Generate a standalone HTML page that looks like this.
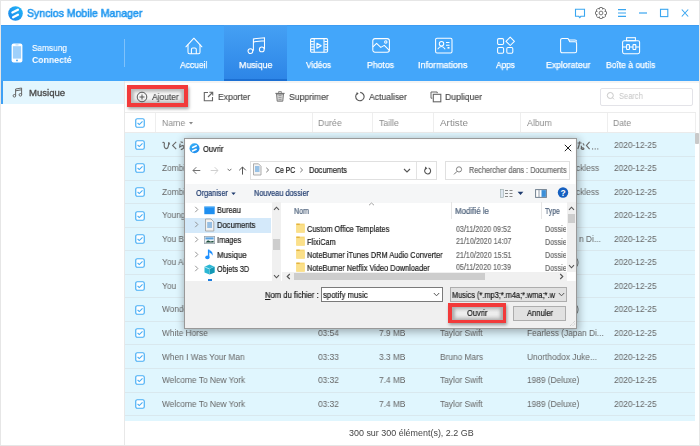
<!DOCTYPE html><html><head><meta charset="utf-8"><style>
*{margin:0;padding:0;box-sizing:border-box}
html,body{width:700px;height:446px;overflow:hidden;background:#fff;font-family:"Liberation Sans",sans-serif}
.a{position:absolute}
.dlg .t{-webkit-text-stroke:0.2px currentColor}
.t{position:absolute;line-height:1;white-space:nowrap;transform-origin:0 0;will-change:transform}
</style></head><body>
<div class="a" style="left:0px;top:0px;width:700px;height:446px;border:1px solid #e6e6e6"></div>
<svg class="a" style="left:7.5px;top:5.8px;" width="15" height="15" viewBox="0 0 15 15"><defs><linearGradient id="lg" x1="1" y1="0" x2="0" y2="1"><stop offset="0" stop-color="#20b8f8"/><stop offset="1" stop-color="#1e84ea"/></linearGradient></defs><circle cx="7.5" cy="7.5" r="7.3" fill="url(#lg)"/><path d="M4.4 6.5 L9.9 3.8 M5.1 11.3 L9.9 8.7" stroke="#fff" stroke-width="2.3" stroke-linecap="round"/></svg>
<div class="t" style="left:27.13px;top:7.80px;font-size:11.4px;color:#2399f0;font-weight:normal;transform:scaleX(0.9247);-webkit-text-stroke:0.6px #2399f0">Syncios Mobile Manager</div>
<svg class="a" style="left:574px;top:8px;" width="12" height="11" viewBox="0 0 12 11"><path d="M1.5 1.2 H10.5 V8.3 H6.8 L5.8 9.6 L4.8 8.3 H1.5 Z" fill="none" stroke="#3aa6f0" stroke-width="1.1"/></svg>
<svg class="a" style="left:595px;top:7px;" width="12" height="12" viewBox="0 0 12 12"><path d="M11.47 4.78 L11.47 7.22 L9.83 7.71 L9.92 7.50 L10.73 9.00 L9.00 10.73 L7.50 9.92 L7.71 9.83 L7.22 11.47 L4.78 11.47 L4.29 9.83 L4.50 9.92 L3.00 10.73 L1.27 9.00 L2.08 7.50 L2.17 7.71 L0.53 7.22 L0.53 4.78 L2.17 4.29 L2.08 4.50 L1.27 3.00 L3.00 1.27 L4.50 2.08 L4.29 2.17 L4.78 0.53 L7.22 0.53 L7.71 2.17 L7.50 2.08 L9.00 1.27 L10.73 3.00 L9.92 4.50 L9.83 4.29 Z" fill="none" stroke="#777" stroke-width="1"/><circle cx="6" cy="6" r="1.9" fill="none" stroke="#777" stroke-width="1"/></svg>
<svg class="a" style="left:617px;top:8px;" width="10" height="10" viewBox="0 0 10 10"><path d="M1 1.6 H9 M1 5 H9 M1 8.4 H9" stroke="#3aa6f0" stroke-width="1.1"/></svg>
<svg class="a" style="left:638px;top:8px;" width="10" height="10" viewBox="0 0 10 10"><path d="M1 5 H9" stroke="#3aa6f0" stroke-width="1.2"/></svg>
<svg class="a" style="left:659px;top:8px;" width="10" height="10" viewBox="0 0 10 10"><rect x="1.5" y="1.3" width="7.3" height="7.3" fill="none" stroke="#3aa6f0" stroke-width="1.1"/></svg>
<svg class="a" style="left:680px;top:8px;" width="10" height="10" viewBox="0 0 10 10"><path d="M1.8 1.5 L8.2 8.5 M8.2 1.5 L1.8 8.5" stroke="#3aa6f0" stroke-width="1.1"/></svg>
<div class="a" style="left:1px;top:25px;width:698px;height:56px;background:#43a6fa"></div>
<div class="a" style="left:1px;top:25px;width:698px;height:1px;background:#3d9cf2"></div>
<svg class="a" style="left:11px;top:43px;" width="12" height="20" viewBox="0 0 12 20"><rect x="0.6" y="0.6" width="10.8" height="18.8" rx="2" fill="#fff"/><rect x="1.9" y="3.2" width="8.2" height="12.4" fill="#9fd0fb"/><circle cx="6" cy="17.4" r="0.9" fill="#45a4f7"/><rect x="4.5" y="1.5" width="3" height="0.8" fill="#9fd0fb"/></svg>
<div class="t" style="left:31.63px;top:44.10px;font-size:8.8px;color:#fff;font-weight:normal;transform:scaleX(0.9389);-webkit-text-stroke:0.15px #fff">Samsung</div>
<div class="t" style="left:31.65px;top:55.30px;font-size:9.4px;color:#fff;font-weight:bold;transform:scaleX(0.9256);">Connecté</div>
<div class="a" style="left:124px;top:39px;width:1px;height:28px;background:rgba(255,255,255,.32)"></div>
<div class="a" style="left:224px;top:25px;width:63px;height:56px;background:linear-gradient(#45a0f4,#2c84e6)"></div>
<div class="a" style="left:224px;top:79px;width:63px;height:2px;background:#1c6fd2"></div>
<div class="t" style="left:179.58px;top:60.90px;font-size:9.2px;color:#fff;font-weight:normal;transform:scaleX(0.9233);-webkit-text-stroke:0.25px #fff">Accueil</div>
<svg class="a" style="left:184.5px;top:36.5px;" width="20" height="20" viewBox="0 0 20 20"><path d="M0.9 9.8 L8.9 1.2 L16.9 9.8" stroke="#fff" stroke-width="1.05" fill="none" stroke-linejoin="round" stroke-linecap="round"/><path d="M3 7.6 V15.3 Q3 16.8 4.5 16.8 H13.5 Q15 16.8 15 15.3 V7.6" stroke="#fff" stroke-width="1.05" fill="none"/><path d="M6.4 16.8 V12.4 Q6.4 11 7.8 11 H9.9 Q11.3 11 11.3 12.4 V16.8" stroke="#fff" stroke-width="1.05" fill="none"/></svg>
<div class="t" style="left:238.87px;top:60.90px;font-size:9.2px;color:#fff;font-weight:normal;transform:scaleX(0.9642);-webkit-text-stroke:0.25px #fff">Musique</div>
<svg class="a" style="left:246.5px;top:36.5px;" width="20" height="20" viewBox="0 0 20 20"><path d="M6.4 13.8 V1.9 L17.5 0.8 V12.2 M6.4 4.9 L17.5 3.8" stroke="#fff" stroke-width="1.05" fill="none"/><circle cx="3.4" cy="14.1" r="2.4" stroke="#fff" stroke-width="1.05" fill="none"/><circle cx="14.8" cy="12.4" r="2.4" stroke="#fff" stroke-width="1.05" fill="none"/></svg>
<div class="t" style="left:305.56px;top:60.90px;font-size:9.2px;color:#fff;font-weight:normal;transform:scaleX(0.8986);-webkit-text-stroke:0.25px #fff">Vidéos</div>
<svg class="a" style="left:309.5px;top:37px;" width="20" height="20" viewBox="0 0 20 20"><rect x="0.6" y="1.6" width="17" height="13.6" rx="1.2" stroke="#fff" stroke-width="1.05" fill="none"/><path d="M4.2 1.6 V15.2 M14 1.6 V15.2" stroke="#fff" stroke-width="1.05" fill="none"/><path d="M1 4.5 H3.8 M1 7.3 H3.8 M1 10 H3.8 M1 12.7 H3.8 M14.4 4.5 H17.2 M14.4 7.3 H17.2 M14.4 10 H17.2 M14.4 12.7 H17.2" stroke="#fff" stroke-width="1.05"/><path d="M6.9 6.3 V11.2 L11.2 8.75 Z" stroke="#fff" stroke-width="1.05" fill="none" stroke-linejoin="round"/></svg>
<div class="t" style="left:366.88px;top:60.90px;font-size:9.2px;color:#fff;font-weight:normal;transform:scaleX(0.9436);-webkit-text-stroke:0.25px #fff">Photos</div>
<svg class="a" style="left:372px;top:37px;" width="20" height="20" viewBox="0 0 20 20"><rect x="0.8" y="1.6" width="16.6" height="13.6" rx="2.2" stroke="#fff" stroke-width="1.05" fill="none"/><path d="M0.9 9.8 L4.6 6.3 L8.8 10.4 L12.3 8.4 L17.3 13.3" stroke="#fff" stroke-width="1.05" fill="none" stroke-linejoin="round"/><circle cx="13.8" cy="5" r="1.2" stroke="#fff" stroke-width="1.05" fill="none"/></svg>
<div class="t" style="left:418.17px;top:60.90px;font-size:9.2px;color:#fff;font-weight:normal;transform:scaleX(0.9788);-webkit-text-stroke:0.25px #fff">Informations</div>
<svg class="a" style="left:435px;top:37px;" width="20" height="20" viewBox="0 0 20 20"><rect x="0.6" y="1.3" width="16.4" height="14.6" rx="1.4" stroke="#fff" stroke-width="1.05" fill="none"/><circle cx="6.5" cy="6.7" r="2.2" stroke="#fff" stroke-width="1.05" fill="none"/><path d="M2.6 12.2 Q6.4 6.8 10.2 12.2" stroke="#fff" stroke-width="1.05" fill="none"/><path d="M11 5.5 H14.5 M11 8.3 H14.5" stroke="#fff" stroke-width="1.05"/><path d="M12.5 10.8 H14.5" stroke="#fff" stroke-width="1.6"/></svg>
<div class="t" style="left:496.38px;top:60.90px;font-size:9.2px;color:#fff;font-weight:normal;transform:scaleX(0.9016);-webkit-text-stroke:0.25px #fff">Apps</div>
<svg class="a" style="left:497px;top:36px;" width="20" height="20" viewBox="0 0 20 20"><rect x="0.6" y="2.6" width="6" height="5.8" rx="1.2" stroke="#fff" stroke-width="1.05" fill="none"/><path d="M13.2 1.1 L17.4 5.3 L13.2 9.5 L9 5.3 Z" stroke="#fff" stroke-width="1.05" fill="none" stroke-linejoin="round"/><rect x="0.6" y="11.5" width="6" height="5.8" rx="1.2" stroke="#fff" stroke-width="1.05" fill="none"/><rect x="9.8" y="11.5" width="6" height="5.8" rx="1.2" stroke="#fff" stroke-width="1.05" fill="none"/></svg>
<div class="t" style="left:545.68px;top:60.90px;font-size:9.2px;color:#fff;font-weight:normal;transform:scaleX(0.9450);-webkit-text-stroke:0.25px #fff">Explorateur</div>
<svg class="a" style="left:560px;top:37px;" width="20" height="20" viewBox="0 0 20 20"><path d="M0.6 3.2 Q0.6 1.5 2.3 1.5 H8 L9.8 4.8 H15 Q16.6 4.8 16.6 6.4 V14 Q16.6 15.7 14.9 15.7 H2.3 Q0.6 15.7 0.6 14 Z" stroke="#fff" stroke-width="1.05" fill="none" stroke-linejoin="round"/><path d="M8.8 2.9 H15 Q16.6 2.9 16.6 4.6" stroke="#fff" stroke-width="1.05" fill="none"/></svg>
<div class="t" style="left:605.90px;top:60.90px;font-size:9.2px;color:#fff;font-weight:normal;transform:scaleX(0.9287);-webkit-text-stroke:0.25px #fff">Boîte à outils</div>
<svg class="a" style="left:622px;top:37px;" width="20" height="20" viewBox="0 0 20 20"><rect x="4.6" y="0.7" width="8.8" height="3" stroke="#fff" stroke-width="1.05" fill="none"/><rect x="0.6" y="3.7" width="17" height="13" rx="1.6" stroke="#fff" stroke-width="1.05" fill="none"/><path d="M0.8 10 H4.6 M7.4 10 H11 M13.8 10 H17.4" stroke="#fff" stroke-width="1.05"/><rect x="4.6" y="7.6" width="2.8" height="4.8" rx=".5" stroke="#fff" stroke-width="1.05" fill="none"/><rect x="11" y="7.6" width="2.8" height="4.8" rx=".5" stroke="#fff" stroke-width="1.05" fill="none"/></svg>
<div class="a" style="left:124px;top:81px;width:1px;height:364px;background:#e8e8e8"></div>
<div class="a" style="left:1px;top:81px;width:123px;height:23px;background:#e3f6fe"></div>
<div class="a" style="left:1px;top:81px;width:2px;height:23px;background:#3ea0f5"></div>
<svg class="a" style="left:12px;top:87px;" width="11" height="11" viewBox="0 0 11 11"><path d="M3.6 8.6 V2 L9.6 1 V7.6 M3.6 3.8 L9.6 2.8" fill="none" stroke="#666" stroke-width="1"/><circle cx="2.4" cy="8.8" r="1.3" fill="none" stroke="#666" stroke-width="1"/><circle cx="8.4" cy="7.8" r="1.3" fill="none" stroke="#666" stroke-width="1"/></svg>
<div class="t" style="left:29.21px;top:88.90px;font-size:9.2px;color:#4a4a4a;font-weight:normal;transform:scaleX(1.0416);-webkit-text-stroke:0.3px #4a4a4a">Musique</div>
<div class="a" style="left:125px;top:81px;width:574px;height:2px;background:#f4f4f4"></div>
<div class="a" style="left:127px;top:85px;width:61px;height:22px;background:#f23a3a;box-shadow:1px 2px 3px rgba(0,0,0,.35)"></div>
<div class="a" style="left:131px;top:89px;width:53px;height:14px;background:linear-gradient(#b9b9b9,#f4f4f4 35%,#f4f4f4 65%,#c8c8c8);box-shadow:inset 3px 0 3px #bbb,inset -3px 0 3px #bbb"></div>
<svg class="a" style="left:136px;top:91px;" width="12" height="12" viewBox="0 0 12 12"><circle cx="6" cy="6" r="4.8" fill="none" stroke="#555" stroke-width="1"/><path d="M6 3.5 V8.5 M3.5 6 H8.5" stroke="#555" stroke-width="1"/></svg>
<div class="t" style="left:151.58px;top:92.30px;font-size:9.4px;color:#474747;font-weight:normal;transform:scaleX(0.9051);-webkit-text-stroke:0.15px #474747">Ajouter</div>
<svg class="a" style="left:203px;top:91px;" width="11" height="11" viewBox="0 0 11 11"><path d="M5 1.5 H1.3 V9.7 H9.5 V6" fill="none" stroke="#666" stroke-width="1.1"/><path d="M5 6 L9.5 1.5 M6.4 1.3 H9.7 V4.6" fill="none" stroke="#666" stroke-width="1.1"/></svg>
<div class="t" style="left:217.69px;top:92.30px;font-size:9.4px;color:#474747;font-weight:normal;transform:scaleX(0.9129);-webkit-text-stroke:0.15px #474747">Exporter</div>
<svg class="a" style="left:275px;top:91px;" width="10" height="11" viewBox="0 0 10 11"><path d="M3.6 1.8 V0.7 H6.4 V1.8" fill="none" stroke="#707070" stroke-width=".9"/><path d="M0.4 2.4 H9.6" stroke="#707070" stroke-width="1.1"/><path d="M1.5 3 L2.2 10.2 H7.8 L8.5 3 Z" fill="#d4d4d4" stroke="#707070" stroke-width=".9"/><path d="M3.5 4.6 H6.5 M3.5 6.6 H6.5 M3.5 8.6 H6.5" stroke="#8a8a8a" stroke-width=".8"/></svg>
<div class="t" style="left:289.21px;top:92.30px;font-size:9.4px;color:#474747;font-weight:normal;transform:scaleX(0.9207);-webkit-text-stroke:0.15px #474747">Supprimer</div>
<svg class="a" style="left:354px;top:91px;" width="11" height="11" viewBox="0 0 11 11"><path d="M3.4 2.2 A4.2 4.2 0 1 0 6.2 1.4" fill="none" stroke="#555" stroke-width="1.1"/><path d="M2.6 0.9 L4.6 2.4 L2.9 3.9" fill="#555"/></svg>
<div class="t" style="left:368.58px;top:92.30px;font-size:9.4px;color:#474747;font-weight:normal;transform:scaleX(0.9197);-webkit-text-stroke:0.15px #474747">Actualiser</div>
<svg class="a" style="left:430px;top:91px;" width="12" height="12" viewBox="0 0 12 12"><path d="M7.2 2.2 V1 H1 V7.2 H2.3" fill="none" stroke="#666" stroke-width="1"/><rect x="3.3" y="3.3" width="7.5" height="7.5" fill="none" stroke="#666" stroke-width="1.1"/></svg>
<div class="t" style="left:445.28px;top:92.30px;font-size:9.4px;color:#474747;font-weight:normal;transform:scaleX(0.9258);-webkit-text-stroke:0.15px #474747">Dupliquer</div>
<div class="a" style="left:600px;top:87.5px;width:93px;height:18px;border:1px solid #e3e3e8;border-radius:2px;background:#fff"></div>
<svg class="a" style="left:606px;top:91px;" width="9" height="10" viewBox="0 0 9 10"><circle cx="4.3" cy="4.5" r="3" fill="none" stroke="#c8c8c8" stroke-width="1"/><path d="M6.5 6.8 L8 8.3" stroke="#c8c8c8" stroke-width="1"/></svg>
<div class="t" style="left:619.16px;top:92.35px;font-size:8.3px;color:#c4c4c4;font-weight:normal;transform:scaleX(0.9056);">Search</div>
<div class="a" style="left:125px;top:112px;width:571px;height:1px;background:#ececec"></div>
<div class="a" style="left:125px;top:132px;width:571px;height:1px;background:#ebebeb"></div>
<div class="a" style="left:155px;top:113px;width:1px;height:19px;background:#eeeeee"></div>
<div class="a" style="left:312px;top:113px;width:1px;height:19px;background:#eeeeee"></div>
<div class="a" style="left:372px;top:113px;width:1px;height:19px;background:#eeeeee"></div>
<div class="a" style="left:433px;top:113px;width:1px;height:19px;background:#eeeeee"></div>
<div class="a" style="left:520px;top:113px;width:1px;height:19px;background:#eeeeee"></div>
<div class="a" style="left:607px;top:113px;width:1px;height:19px;background:#eeeeee"></div>
<div class="a" style="left:695px;top:113px;width:1px;height:19px;background:#eeeeee"></div>
<svg class="a" style="left:135px;top:117.5px;" width="10" height="10" viewBox="0 0 10 10"><rect x="0.75" y="0.75" width="8.5" height="8.5" rx="1.5" fill="#fff" stroke="#45adf5" stroke-width="1.15"/><path d="M2.6 5 L4.3 6.6 L7.5 3.3" fill="none" stroke="#45adf5" stroke-width="1.1"/></svg>
<div class="t" style="left:161.89px;top:118.90px;font-size:9.2px;color:#8c8c8c;font-weight:normal;transform:scaleX(0.9405);">Name</div>
<svg class="a" style="left:188px;top:121px;" width="6" height="5" viewBox="0 0 6 5"><path d="M1 1 H5 L3 3.4 Z" fill="#888"/></svg>
<div class="t" style="left:318.28px;top:118.90px;font-size:9.2px;color:#8c8c8c;font-weight:normal;transform:scaleX(0.9457);">Durée</div>
<div class="t" style="left:379.40px;top:118.90px;font-size:9.2px;color:#8c8c8c;font-weight:normal;transform:scaleX(0.9531);">Taille</div>
<div class="t" style="left:440.38px;top:118.90px;font-size:9.2px;color:#8c8c8c;font-weight:normal;transform:scaleX(1.0762);">Artiste</div>
<div class="t" style="left:526.98px;top:118.90px;font-size:9.2px;color:#8c8c8c;font-weight:normal;transform:scaleX(0.9426);">Album</div>
<div class="t" style="left:613.29px;top:118.90px;font-size:9.2px;color:#8c8c8c;font-weight:normal;transform:scaleX(0.9309);">Date</div>
<div class="a" style="left:125px;top:133px;width:570px;height:288px;background:#e0f6fe"></div>
<div class="a" style="left:125px;top:156px;width:570px;height:1px;background:#d9e8ee"></div>
<svg class="a" style="left:135px;top:139.9px;" width="10" height="10" viewBox="0 0 10 10"><rect x="0.75" y="0.75" width="8.5" height="8.5" rx="1.5" fill="#fff" stroke="#45adf5" stroke-width="1.15"/><path d="M2.6 5 L4.3 6.6 L7.5 3.3" fill="none" stroke="#45adf5" stroke-width="1.1"/></svg>
<div class="t" style="left:318.19px;top:141.00px;font-size:9.0px;color:#666;font-weight:normal;transform:scaleX(0.9255);">04:12</div>
<div class="t" style="left:379.27px;top:141.00px;font-size:9.0px;color:#666;font-weight:normal;transform:scaleX(0.9255);">5.1 MB</div>
<div class="t" style="left:440.38px;top:141.00px;font-size:9.0px;color:#666;font-weight:normal;transform:scaleX(0.9255);">Aimer</div>
<div class="t" style="left:613.58px;top:141.00px;font-size:9.0px;color:#666;font-weight:normal;transform:scaleX(0.9255);">2020-12-25</div>
<svg class="a" style="left:577px;top:141.3px;" width="24" height="10" viewBox="0 0 24 10"><path d="M0.6 2 H4.6 M2.8 0.4 Q2.2 5 0.8 8 M5.8 2.4 Q7 3.2 7 4.4 M4.4 4.8 V7.2 Q4.4 8.6 6.2 8.4 Q7.6 8 6.4 7 Q5 6.4 3.8 8" fill="none" stroke="#6a6a6a" stroke-width="1.1"/><path d="M12.6 0.8 L9.4 4.4 L12.6 8.2" fill="none" stroke="#6a6a6a" stroke-width="1.1"/><circle cx="15.6" cy="7.9" r=".6" fill="#666"/><circle cx="18.2" cy="7.9" r=".6" fill="#666"/><circle cx="20.8" cy="7.9" r=".6" fill="#666"/></svg>
<div class="a" style="left:125px;top:180px;width:570px;height:1px;background:#d9e8ee"></div>
<svg class="a" style="left:135px;top:163.45000000000002px;" width="10" height="10" viewBox="0 0 10 10"><rect x="0.75" y="0.75" width="8.5" height="8.5" rx="1.5" fill="#fff" stroke="#45adf5" stroke-width="1.15"/><path d="M2.6 5 L4.3 6.6 L7.5 3.3" fill="none" stroke="#45adf5" stroke-width="1.1"/></svg>
<div class="t" style="left:161.73px;top:164.00px;font-size:9.0px;color:#666;font-weight:normal;transform:scaleX(0.9255);">Zombie</div>
<div class="t" style="left:318.19px;top:164.00px;font-size:9.0px;color:#666;font-weight:normal;transform:scaleX(0.9255);">03:40</div>
<div class="t" style="left:379.25px;top:164.00px;font-size:9.0px;color:#666;font-weight:normal;transform:scaleX(0.9255);">8.4 MB</div>
<div class="t" style="left:440.21px;top:164.00px;font-size:9.0px;color:#666;font-weight:normal;transform:scaleX(0.9255);">The Cranberries</div>
<div class="t" style="left:613.58px;top:164.00px;font-size:9.0px;color:#666;font-weight:normal;transform:scaleX(0.9255);">2020-12-25</div>
<div class="t" style="left:576.16px;top:164.00px;font-size:9.0px;color:#666;font-weight:normal;transform:scaleX(0.9255);">ckless</div>
<div class="a" style="left:125px;top:203px;width:570px;height:1px;background:#d9e8ee"></div>
<svg class="a" style="left:135px;top:187.0px;" width="10" height="10" viewBox="0 0 10 10"><rect x="0.75" y="0.75" width="8.5" height="8.5" rx="1.5" fill="#fff" stroke="#45adf5" stroke-width="1.15"/><path d="M2.6 5 L4.3 6.6 L7.5 3.3" fill="none" stroke="#45adf5" stroke-width="1.1"/></svg>
<div class="t" style="left:161.73px;top:188.00px;font-size:9.0px;color:#666;font-weight:normal;transform:scaleX(0.9255);">Zombie</div>
<div class="t" style="left:318.19px;top:188.00px;font-size:9.0px;color:#666;font-weight:normal;transform:scaleX(0.9255);">03:40</div>
<div class="t" style="left:379.25px;top:188.00px;font-size:9.0px;color:#666;font-weight:normal;transform:scaleX(0.9255);">8.4 MB</div>
<div class="t" style="left:440.21px;top:188.00px;font-size:9.0px;color:#666;font-weight:normal;transform:scaleX(0.9255);">The Cranberries</div>
<div class="t" style="left:613.58px;top:188.00px;font-size:9.0px;color:#666;font-weight:normal;transform:scaleX(0.9255);">2020-12-25</div>
<div class="t" style="left:576.16px;top:188.00px;font-size:9.0px;color:#666;font-weight:normal;transform:scaleX(0.9255);">ckless</div>
<div class="a" style="left:125px;top:227px;width:570px;height:1px;background:#d9e8ee"></div>
<svg class="a" style="left:135px;top:210.55px;" width="10" height="10" viewBox="0 0 10 10"><rect x="0.75" y="0.75" width="8.5" height="8.5" rx="1.5" fill="#fff" stroke="#45adf5" stroke-width="1.15"/><path d="M2.6 5 L4.3 6.6 L7.5 3.3" fill="none" stroke="#45adf5" stroke-width="1.1"/></svg>
<div class="t" style="left:161.81px;top:211.00px;font-size:9.0px;color:#666;font-weight:normal;transform:scaleX(0.9255);">Young</div>
<div class="t" style="left:318.19px;top:211.00px;font-size:9.0px;color:#666;font-weight:normal;transform:scaleX(0.9255);">03:20</div>
<div class="t" style="left:379.18px;top:211.00px;font-size:9.0px;color:#666;font-weight:normal;transform:scaleX(0.9255);">7.6 MB</div>
<div class="t" style="left:440.21px;top:211.00px;font-size:9.0px;color:#666;font-weight:normal;transform:scaleX(0.9255);">Taylor Swift</div>
<div class="t" style="left:613.58px;top:211.00px;font-size:9.0px;color:#666;font-weight:normal;transform:scaleX(0.9255);">2020-12-25</div>
<div class="a" style="left:125px;top:250px;width:570px;height:1px;background:#d9e8ee"></div>
<svg class="a" style="left:135px;top:234.1px;" width="10" height="10" viewBox="0 0 10 10"><rect x="0.75" y="0.75" width="8.5" height="8.5" rx="1.5" fill="#fff" stroke="#45adf5" stroke-width="1.15"/><path d="M2.6 5 L4.3 6.6 L7.5 3.3" fill="none" stroke="#45adf5" stroke-width="1.1"/></svg>
<div class="t" style="left:161.81px;top:235.00px;font-size:9.0px;color:#666;font-weight:normal;transform:scaleX(0.9255);">You Belong With Me</div>
<div class="t" style="left:318.19px;top:235.00px;font-size:9.0px;color:#666;font-weight:normal;transform:scaleX(0.9255);">03:51</div>
<div class="t" style="left:379.18px;top:235.00px;font-size:9.0px;color:#666;font-weight:normal;transform:scaleX(0.9255);">7.7 MB</div>
<div class="t" style="left:440.21px;top:235.00px;font-size:9.0px;color:#666;font-weight:normal;transform:scaleX(0.9255);">Taylor Swift</div>
<div class="t" style="left:613.58px;top:235.00px;font-size:9.0px;color:#666;font-weight:normal;transform:scaleX(0.9255);">2020-12-25</div>
<div class="t" style="left:578.69px;top:235.00px;font-size:9.0px;color:#666;font-weight:normal;transform:scaleX(0.9255);">n Di...</div>
<div class="a" style="left:125px;top:274px;width:570px;height:1px;background:#d9e8ee"></div>
<svg class="a" style="left:135px;top:257.65px;" width="10" height="10" viewBox="0 0 10 10"><rect x="0.75" y="0.75" width="8.5" height="8.5" rx="1.5" fill="#fff" stroke="#45adf5" stroke-width="1.15"/><path d="M2.6 5 L4.3 6.6 L7.5 3.3" fill="none" stroke="#45adf5" stroke-width="1.1"/></svg>
<div class="t" style="left:161.81px;top:258.00px;font-size:9.0px;color:#666;font-weight:normal;transform:scaleX(0.9255);">You All Over Me</div>
<div class="t" style="left:318.19px;top:258.00px;font-size:9.0px;color:#666;font-weight:normal;transform:scaleX(0.9255);">03:41</div>
<div class="t" style="left:379.18px;top:258.00px;font-size:9.0px;color:#666;font-weight:normal;transform:scaleX(0.9255);">7.5 MB</div>
<div class="t" style="left:440.21px;top:258.00px;font-size:9.0px;color:#666;font-weight:normal;transform:scaleX(0.9255);">Taylor Swift</div>
<div class="t" style="left:613.58px;top:258.00px;font-size:9.0px;color:#666;font-weight:normal;transform:scaleX(0.9255);">2020-12-25</div>
<div class="t" style="left:576.33px;top:258.00px;font-size:9.0px;color:#666;font-weight:normal;transform:scaleX(0.9255);">)</div>
<div class="a" style="left:125px;top:297px;width:570px;height:1px;background:#d9e8ee"></div>
<svg class="a" style="left:135px;top:281.2px;" width="10" height="10" viewBox="0 0 10 10"><rect x="0.75" y="0.75" width="8.5" height="8.5" rx="1.5" fill="#fff" stroke="#45adf5" stroke-width="1.15"/><path d="M2.6 5 L4.3 6.6 L7.5 3.3" fill="none" stroke="#45adf5" stroke-width="1.1"/></svg>
<div class="t" style="left:161.81px;top:282.00px;font-size:9.0px;color:#666;font-weight:normal;transform:scaleX(0.9255);">You</div>
<div class="t" style="left:318.19px;top:282.00px;font-size:9.0px;color:#666;font-weight:normal;transform:scaleX(0.9255);">03:34</div>
<div class="t" style="left:379.25px;top:282.00px;font-size:9.0px;color:#666;font-weight:normal;transform:scaleX(0.9255);">8.1 MB</div>
<div class="t" style="left:440.21px;top:282.00px;font-size:9.0px;color:#666;font-weight:normal;transform:scaleX(0.9255);">Taylor Swift</div>
<div class="t" style="left:613.58px;top:282.00px;font-size:9.0px;color:#666;font-weight:normal;transform:scaleX(0.9255);">2020-12-25</div>
<div class="a" style="left:125px;top:321px;width:570px;height:1px;background:#d9e8ee"></div>
<svg class="a" style="left:135px;top:304.75px;" width="10" height="10" viewBox="0 0 10 10"><rect x="0.75" y="0.75" width="8.5" height="8.5" rx="1.5" fill="#fff" stroke="#45adf5" stroke-width="1.15"/><path d="M2.6 5 L4.3 6.6 L7.5 3.3" fill="none" stroke="#45adf5" stroke-width="1.1"/></svg>
<div class="t" style="left:161.96px;top:305.00px;font-size:9.0px;color:#666;font-weight:normal;transform:scaleX(0.9255);">Wonderland</div>
<div class="t" style="left:318.19px;top:305.00px;font-size:9.0px;color:#666;font-weight:normal;transform:scaleX(0.9255);">04:05</div>
<div class="t" style="left:379.20px;top:305.00px;font-size:9.0px;color:#666;font-weight:normal;transform:scaleX(0.9255);">9.1 MB</div>
<div class="t" style="left:440.21px;top:305.00px;font-size:9.0px;color:#666;font-weight:normal;transform:scaleX(0.9255);">Taylor Swift</div>
<div class="t" style="left:613.58px;top:305.00px;font-size:9.0px;color:#666;font-weight:normal;transform:scaleX(0.9255);">2020-12-25</div>
<div class="t" style="left:576.33px;top:305.00px;font-size:9.0px;color:#666;font-weight:normal;transform:scaleX(0.9255);">)</div>
<div class="a" style="left:125px;top:344px;width:570px;height:1px;background:#d9e8ee"></div>
<svg class="a" style="left:135px;top:328.29999999999995px;" width="10" height="10" viewBox="0 0 10 10"><rect x="0.75" y="0.75" width="8.5" height="8.5" rx="1.5" fill="#fff" stroke="#45adf5" stroke-width="1.15"/><path d="M2.6 5 L4.3 6.6 L7.5 3.3" fill="none" stroke="#45adf5" stroke-width="1.1"/></svg>
<div class="t" style="left:161.96px;top:329.00px;font-size:9.0px;color:#666;font-weight:normal;transform:scaleX(0.9255);">White Horse</div>
<div class="t" style="left:318.19px;top:329.00px;font-size:9.0px;color:#666;font-weight:normal;transform:scaleX(0.9255);">03:54</div>
<div class="t" style="left:379.18px;top:329.00px;font-size:9.0px;color:#666;font-weight:normal;transform:scaleX(0.9255);">7.9 MB</div>
<div class="t" style="left:440.21px;top:329.00px;font-size:9.0px;color:#666;font-weight:normal;transform:scaleX(0.9255);">Taylor Swift</div>
<div class="t" style="left:526.71px;top:329.00px;font-size:9.0px;color:#666;font-weight:normal;transform:scaleX(0.9255);">Fearless (Japan Di...</div>
<div class="t" style="left:613.58px;top:329.00px;font-size:9.0px;color:#666;font-weight:normal;transform:scaleX(0.9255);">2020-12-25</div>
<div class="a" style="left:125px;top:368px;width:570px;height:1px;background:#d9e8ee"></div>
<svg class="a" style="left:135px;top:351.85px;" width="10" height="10" viewBox="0 0 10 10"><rect x="0.75" y="0.75" width="8.5" height="8.5" rx="1.5" fill="#fff" stroke="#45adf5" stroke-width="1.15"/><path d="M2.6 5 L4.3 6.6 L7.5 3.3" fill="none" stroke="#45adf5" stroke-width="1.1"/></svg>
<div class="t" style="left:161.96px;top:353.00px;font-size:9.0px;color:#666;font-weight:normal;transform:scaleX(0.9255);">When I Was Your Man</div>
<div class="t" style="left:318.19px;top:353.00px;font-size:9.0px;color:#666;font-weight:normal;transform:scaleX(0.9255);">03:33</div>
<div class="t" style="left:379.29px;top:353.00px;font-size:9.0px;color:#666;font-weight:normal;transform:scaleX(0.9255);">3.3 MB</div>
<div class="t" style="left:439.71px;top:353.00px;font-size:9.0px;color:#666;font-weight:normal;transform:scaleX(0.9255);">Bruno Mars</div>
<div class="t" style="left:526.75px;top:353.00px;font-size:9.0px;color:#666;font-weight:normal;transform:scaleX(0.9255);">Unorthodox Juke...</div>
<div class="t" style="left:613.58px;top:353.00px;font-size:9.0px;color:#666;font-weight:normal;transform:scaleX(0.9255);">2020-12-25</div>
<div class="a" style="left:125px;top:392px;width:570px;height:1px;background:#d9e8ee"></div>
<svg class="a" style="left:135px;top:375.4px;" width="10" height="10" viewBox="0 0 10 10"><rect x="0.75" y="0.75" width="8.5" height="8.5" rx="1.5" fill="#fff" stroke="#45adf5" stroke-width="1.15"/><path d="M2.6 5 L4.3 6.6 L7.5 3.3" fill="none" stroke="#45adf5" stroke-width="1.1"/></svg>
<div class="t" style="left:161.96px;top:376.00px;font-size:9.0px;color:#666;font-weight:normal;transform:scaleX(0.9255);">Welcome To New York</div>
<div class="t" style="left:318.19px;top:376.00px;font-size:9.0px;color:#666;font-weight:normal;transform:scaleX(0.9255);">03:32</div>
<div class="t" style="left:379.18px;top:376.00px;font-size:9.0px;color:#666;font-weight:normal;transform:scaleX(0.9255);">7.4 MB</div>
<div class="t" style="left:440.21px;top:376.00px;font-size:9.0px;color:#666;font-weight:normal;transform:scaleX(0.9255);">Taylor Swift</div>
<div class="t" style="left:526.78px;top:376.00px;font-size:9.0px;color:#666;font-weight:normal;transform:scaleX(0.9255);">1989 (Deluxe)</div>
<div class="t" style="left:613.58px;top:376.00px;font-size:9.0px;color:#666;font-weight:normal;transform:scaleX(0.9255);">2020-12-25</div>
<div class="a" style="left:125px;top:415px;width:570px;height:1px;background:#d9e8ee"></div>
<svg class="a" style="left:135px;top:398.95px;" width="10" height="10" viewBox="0 0 10 10"><rect x="0.75" y="0.75" width="8.5" height="8.5" rx="1.5" fill="#fff" stroke="#45adf5" stroke-width="1.15"/><path d="M2.6 5 L4.3 6.6 L7.5 3.3" fill="none" stroke="#45adf5" stroke-width="1.1"/></svg>
<div class="t" style="left:161.96px;top:400.00px;font-size:9.0px;color:#666;font-weight:normal;transform:scaleX(0.9255);">Welcome To New York</div>
<div class="t" style="left:318.19px;top:400.00px;font-size:9.0px;color:#666;font-weight:normal;transform:scaleX(0.9255);">03:32</div>
<div class="t" style="left:379.18px;top:400.00px;font-size:9.0px;color:#666;font-weight:normal;transform:scaleX(0.9255);">7.4 MB</div>
<div class="t" style="left:440.21px;top:400.00px;font-size:9.0px;color:#666;font-weight:normal;transform:scaleX(0.9255);">Taylor Swift</div>
<div class="t" style="left:526.78px;top:400.00px;font-size:9.0px;color:#666;font-weight:normal;transform:scaleX(0.9255);">1989 (Deluxe)</div>
<div class="t" style="left:613.58px;top:400.00px;font-size:9.0px;color:#666;font-weight:normal;transform:scaleX(0.9255);">2020-12-25</div>
<svg class="a" style="left:162px;top:141.3px;" width="24" height="10" viewBox="0 0 24 10"><path d="M0.5 1.6 Q2.2 1 2.4 2.4 Q1.6 6.6 3.8 7.6 Q6.4 8 6.6 3 L6.7 1.2 Q7.2 2.6 7.8 3.4" fill="none" stroke="#6a6a6a" stroke-width="1.15"/><path d="M14.2 0.8 L10.6 4.4 L14.2 8.2" fill="none" stroke="#6a6a6a" stroke-width="1.15"/><path d="M18.6 0.6 Q19.6 1.4 20.8 1.4 M18.2 2.6 Q17.6 5 17.8 6.2 Q20.4 3.8 21.9 5.2 Q22.6 7.4 18.8 8.6" fill="none" stroke="#6a6a6a" stroke-width="1.15"/></svg>
<div class="a" style="left:695px;top:133px;width:4px;height:11px;background:#c9c9c9;border-radius:1px"></div>
<div class="a" style="left:125px;top:421px;width:574px;height:24px;background:#fff"></div>
<div class="t" style="left:349.26px;top:429.15px;font-size:8.7px;color:#444;font-weight:normal;transform:scaleX(1.0282);">300 sur 300 élément(s), 2.2 GB</div>
<div class="a dlg" style="left:0;top:0;width:700px;height:446px"><div class="a" style="left:184px;top:138px;width:393px;height:191px;background:#fff;border:1px solid #999;box-shadow:inset 0 0 0 1px #fafafa,1px 2px 8px 1px rgba(0,0,0,.3)"></div>
<svg class="a" style="left:189px;top:143px;" width="11" height="11" viewBox="0 0 11 11"><defs><linearGradient id="lg2" x1="0" y1="0" x2="1" y2="1"><stop offset="0" stop-color="#3ab4f8"/><stop offset="1" stop-color="#1a86ec"/></linearGradient></defs><circle cx="5.5" cy="5.2" r="5" fill="url(#lg2)"/><path d="M3.6 4.5 L7.3 2.8 M3.5 8 L7.2 6.3" stroke="#fff" stroke-width="1.5" stroke-linecap="round"/></svg>
<div class="t" style="left:202.64px;top:145.15px;font-size:8.7px;color:#1a1a1a;font-weight:normal;transform:scaleX(0.8642);">Ouvrir</div>
<svg class="a" style="left:564px;top:144px;" width="8" height="8" viewBox="0 0 8 8"><path d="M0.8 0.8 L7.2 7.2 M7.2 0.8 L0.8 7.2" stroke="#222" stroke-width="1"/></svg>
<svg class="a" style="left:192px;top:166px;" width="9" height="9" viewBox="0 0 9 9"><path d="M8.3 4.5 H1 M4.3 1.2 L1 4.5 L4.3 7.8" fill="none" stroke="#707070" stroke-width="1"/></svg>
<svg class="a" style="left:210px;top:166px;" width="9" height="9" viewBox="0 0 9 9"><path d="M0.7 4.5 H8 M4.7 1.2 L8 4.5 L4.7 7.8" fill="none" stroke="#cfcfcf" stroke-width="1"/></svg>
<svg class="a" style="left:227px;top:168px;" width="5" height="4" viewBox="0 0 5 4"><path d="M0.6 0.8 L2.5 2.8 L4.4 0.8" fill="none" stroke="#707070" stroke-width="1"/></svg>
<svg class="a" style="left:238px;top:166px;" width="9" height="9" viewBox="0 0 9 9"><path d="M4.5 8.6 V1 M1.2 4.3 L4.5 1 L7.8 4.3" fill="none" stroke="#555" stroke-width="1"/></svg>
<div class="a" style="left:250px;top:161px;width:187px;height:19px;border:1px solid #e0e0e0;background:#fff"></div>
<div class="a" style="left:416px;top:162px;width:1px;height:17px;background:#e3e3e3"></div>
<svg class="a" style="left:252px;top:163px;" width="10" height="13" viewBox="0 0 10 13"><path d="M1.5 0.8 H6.5 L9 3.3 V12 H1.5 Z" fill="#f3f3f3" stroke="#9a9a9a" stroke-width=".8"/><path d="M3 4 H7.5 M3 6 H7.5 M3 8 H7.5" stroke="#3c8fd8" stroke-width="1"/></svg>
<svg class="a" style="left:265px;top:167px;" width="5" height="6" viewBox="0 0 5 6"><path d="M1.3 0.8 L3.6 3 L1.3 5.2" fill="none" stroke="#666" stroke-width=".9"/></svg>
<div class="t" style="left:274.66px;top:166.15px;font-size:8.7px;color:#1a1a1a;font-weight:normal;transform:scaleX(0.7884);">Ce PC</div>
<svg class="a" style="left:299px;top:167px;" width="5" height="6" viewBox="0 0 5 6"><path d="M1.3 0.8 L3.6 3 L1.3 5.2" fill="none" stroke="#666" stroke-width=".9"/></svg>
<div class="t" style="left:308.78px;top:166.15px;font-size:8.7px;color:#1a1a1a;font-weight:normal;transform:scaleX(0.8656);">Documents</div>
<svg class="a" style="left:403px;top:168px;" width="8" height="5" viewBox="0 0 8 5"><path d="M1 1 L4 4 L7 1" fill="none" stroke="#555" stroke-width="1.1"/></svg>
<svg class="a" style="left:423px;top:166px;" width="9" height="9" viewBox="0 0 9 9"><path d="M3.2 2.3 A3 3 0 1 0 5.6 2.1" fill="none" stroke="#555" stroke-width="1.1"/><path d="M2 0.6 L4.4 2.2 L2.2 3.9 Z" fill="#555"/></svg>
<div class="a" style="left:445px;top:161px;width:125px;height:19px;border:1px solid #e0e0e0;background:#fff"></div>
<svg class="a" style="left:453px;top:166px;" width="10" height="9" viewBox="0 0 10 9"><circle cx="6" cy="3.4" r="2.6" fill="none" stroke="#777" stroke-width=".9"/><path d="M4.1 5.3 L1 8.4" stroke="#777" stroke-width="1"/></svg>
<div class="t" style="left:469.40px;top:166.15px;font-size:8.7px;color:#6a6a6a;font-weight:normal;transform:scaleX(0.8327);">Rechercher dans : Documents</div>
<div class="a" style="left:185px;top:184px;width:391px;height:19px;background:#f5f6f7"></div>
<div class="t" style="left:195.66px;top:189.15px;font-size:8.7px;color:#1e3a6e;font-weight:normal;transform:scaleX(0.8340);">Organiser</div>
<svg class="a" style="left:231px;top:192px;" width="5" height="4" viewBox="0 0 5 4"><path d="M0.3 0.4 H4.7 L2.5 3 Z" fill="#1e3a6e"/></svg>
<div class="t" style="left:253.99px;top:189.15px;font-size:8.7px;color:#1e3a6e;font-weight:normal;transform:scaleX(0.8441);">Nouveau dossier</div>
<svg class="a" style="left:500px;top:189px;" width="13" height="9" viewBox="0 0 13 9"><rect x="0.5" y="0.5" width="3" height="8" fill="#dde6f0" stroke="#9aa" stroke-width=".6"/><path d="M5 1.5 H8 M9.5 1.5 H12.5 M5 4.5 H8 M9.5 4.5 H12.5 M5 7.5 H8 M9.5 7.5 H12.5" stroke="#888" stroke-width="1"/></svg>
<svg class="a" style="left:517px;top:191px;" width="7" height="5" viewBox="0 0 7 5"><path d="M0.6 0.8 H6.4 L3.5 4 Z" fill="#1e3a6e"/></svg>
<svg class="a" style="left:535px;top:189px;" width="12" height="9" viewBox="0 0 12 9"><rect x="0.6" y="0.6" width="10.8" height="7.8" fill="#fff" stroke="#6f7f8f" stroke-width="1"/><rect x="6.5" y="1.1" width="4.4" height="6.8" fill="#3c8fd8"/><path d="M4 1 V8" stroke="#6f7f8f" stroke-width=".8"/></svg>
<svg class="a" style="left:557px;top:187px;" width="12" height="11" viewBox="0 0 12 11"><circle cx="6" cy="5.5" r="5.2" fill="#1660c0"/><text x="6" y="8.6" font-size="8.5" font-weight="bold" text-anchor="middle" fill="#fff" font-family="Liberation Sans">?</text></svg>
<div class="a" style="left:185px;top:218px;width:86px;height:15px;background:#d4e9fa"></div>
<svg class="a" style="left:194px;top:206.20000000000002px;" width="5" height="7" viewBox="0 0 5 7"><path d="M1.2 0.8 L3.8 3.5 L1.2 6.2" fill="none" stroke="#8a8a8a" stroke-width=".9"/></svg>
<div class="t" style="left:216.89px;top:206.15px;font-size:8.7px;color:#1a1a1a;font-weight:normal;transform:scaleX(0.8485);">Bureau</div>
<svg class="a" style="left:194px;top:221.4px;" width="5" height="7" viewBox="0 0 5 7"><path d="M1.2 0.8 L3.8 3.5 L1.2 6.2" fill="none" stroke="#8a8a8a" stroke-width=".9"/></svg>
<div class="t" style="left:216.87px;top:221.15px;font-size:8.7px;color:#1a1a1a;font-weight:normal;transform:scaleX(0.8749);">Documents</div>
<svg class="a" style="left:194px;top:236.0px;" width="5" height="7" viewBox="0 0 5 7"><path d="M1.2 0.8 L3.8 3.5 L1.2 6.2" fill="none" stroke="#8a8a8a" stroke-width=".9"/></svg>
<div class="t" style="left:216.82px;top:236.15px;font-size:8.7px;color:#1a1a1a;font-weight:normal;transform:scaleX(0.8459);">Images</div>
<svg class="a" style="left:194px;top:251.00000000000003px;" width="5" height="7" viewBox="0 0 5 7"><path d="M1.2 0.8 L3.8 3.5 L1.2 6.2" fill="none" stroke="#8a8a8a" stroke-width=".9"/></svg>
<div class="t" style="left:216.85px;top:251.15px;font-size:8.7px;color:#1a1a1a;font-weight:normal;transform:scaleX(0.9032);">Musique</div>
<svg class="a" style="left:194px;top:265.4px;" width="5" height="7" viewBox="0 0 5 7"><path d="M1.2 0.8 L3.8 3.5 L1.2 6.2" fill="none" stroke="#8a8a8a" stroke-width=".9"/></svg>
<div class="t" style="left:217.16px;top:265.15px;font-size:8.7px;color:#1a1a1a;font-weight:normal;transform:scaleX(0.8319);">Objets 3D</div>
<svg class="a" style="left:204px;top:206px;" width="11" height="9" viewBox="0 0 11 9"><rect x="0.3" y="0.6" width="10.4" height="7.6" fill="#1e8ff0"/><rect x="0.3" y="0.6" width="10.4" height="1" fill="#55aef5"/></svg>
<svg class="a" style="left:204px;top:218px;" width="11" height="14" viewBox="0 0 11 14"><path d="M1.5 1 H7 L9.8 3.8 V13 H1.5 Z" fill="#f2f2f2" stroke="#9a9a9a" stroke-width=".8"/><path d="M3.2 5 H8 M3.2 7 H8 M3.2 9 H8" stroke="#3a8bd6" stroke-width="1"/></svg>
<svg class="a" style="left:204px;top:236px;" width="11" height="8" viewBox="0 0 11 8"><rect x="0.4" y="0.4" width="10.2" height="7.2" fill="#eef2f6" stroke="#9aa4ae" stroke-width=".8"/><rect x="1.4" y="1.4" width="8.2" height="2" fill="#5aa2e0"/><path d="M1.4 6.6 L4 4.2 L6.5 5.6 L9.6 4.8 V6.6 Z" fill="#1d4d3a"/></svg>
<svg class="a" style="left:205px;top:249px;" width="9" height="11" viewBox="0 0 9 11"><path d="M3.6 0.5 V8" stroke="#1e90ff" stroke-width="1.4"/><ellipse cx="2.4" cy="8.4" rx="2.2" ry="1.8" fill="#1e90ff"/><path d="M4.2 0.8 Q8.5 3 7.5 6.8 Q7 4.4 4.2 3.6 Z" fill="#1e90ff"/></svg>
<svg class="a" style="left:204px;top:264px;" width="11" height="11" viewBox="0 0 11 11"><path d="M5.5 0.5 L10.5 2.8 V8.4 L5.5 10.6 L0.5 8.4 V2.8 Z" fill="#2bb7d4"/><path d="M0.5 2.8 L5.5 5 L10.5 2.8 M5.5 5 V10.6" fill="none" stroke="#e8fbff" stroke-width=".7"/><path d="M5.5 5 L10.5 2.8 V8.4 L5.5 10.6 Z" fill="#1397b5"/></svg>
<div class="a" style="left:208px;top:279px;width:4px;height:2px;background:#1e7fe0"></div>
<div class="a" style="left:272px;top:202px;width:9px;height:79px;background:#f0f0f0"></div>
<svg class="a" style="left:273px;top:206px;" width="7" height="5" viewBox="0 0 7 5"><path d="M1 3.8 L3.5 1.2 L6 3.8" fill="none" stroke="#555" stroke-width="1.1"/></svg>
<div class="a" style="left:273px;top:239px;width:7px;height:10.5px;background:#cdcdcd"></div>
<svg class="a" style="left:273px;top:274px;" width="7" height="5" viewBox="0 0 7 5"><path d="M1 1.2 L3.5 3.8 L6 1.2" fill="none" stroke="#555" stroke-width="1.1"/></svg>
<svg class="a" style="left:368px;top:202px;" width="7" height="4" viewBox="0 0 7 4"><path d="M1 3.2 L3.5 1 L6 3.2" fill="none" stroke="#9a9a9a" stroke-width=".9"/></svg>
<div class="t" style="left:294.41px;top:207.15px;font-size:8.7px;color:#4c607a;font-weight:normal;transform:scaleX(0.8200);">Nom</div>
<div class="a" style="left:451px;top:202px;width:1px;height:17px;background:#e5e5e5"></div>
<div class="a" style="left:541px;top:202px;width:1px;height:17px;background:#e5e5e5"></div>
<div class="t" style="left:455.34px;top:207.15px;font-size:8.7px;color:#4c607a;font-weight:normal;transform:scaleX(0.9129);">Modifié le</div>
<div class="t" style="left:545.45px;top:207.15px;font-size:8.7px;color:#4c607a;font-weight:normal;transform:scaleX(0.7872);">Type</div>
<svg class="a" style="left:295.5px;top:223.1px;" width="9" height="10" viewBox="0 0 9 10"><rect x="0.3" y="0.6" width="8.4" height="9" fill="#f8d775"/><rect x="0.3" y="0.6" width="3.4" height="1.4" fill="#e4b440"/><rect x="0.3" y="2.2" width="8.4" height="7.4" fill="#fbe08a"/></svg>
<div class="a" style="left:307px;top:222.6px;width:144px;height:12px;overflow:hidden"><div class="t" style="left:0.23px;top:2.15px;font-size:8.7px;color:#1a1a1a;font-weight:normal;transform:scaleX(0.8509);">Custom Office Templates</div>
</div>
<div class="t" style="left:455.73px;top:225.15px;font-size:8.7px;color:#6d6d6d;font-weight:normal;transform:scaleX(0.8200);">03/11/2020 09:52</div>
<div class="a" style="left:545px;top:222.6px;width:21px;height:12px;overflow:hidden"><div class="t" style="left:0.01px;top:2.15px;font-size:8.7px;color:#6d6d6d;font-weight:normal;transform:scaleX(0.8200);">Dossier de fichiers</div>
</div>
<svg class="a" style="left:295.5px;top:236.0px;" width="9" height="10" viewBox="0 0 9 10"><rect x="0.3" y="0.6" width="8.4" height="9" fill="#f8d775"/><rect x="0.3" y="0.6" width="3.4" height="1.4" fill="#e4b440"/><rect x="0.3" y="2.2" width="8.4" height="7.4" fill="#fbe08a"/></svg>
<div class="a" style="left:307px;top:235.5px;width:144px;height:12px;overflow:hidden"><div class="t" style="left:-0.01px;top:2.15px;font-size:8.7px;color:#1a1a1a;font-weight:normal;transform:scaleX(0.8509);">FlixiCam</div>
</div>
<div class="t" style="left:455.64px;top:237.15px;font-size:8.7px;color:#6d6d6d;font-weight:normal;transform:scaleX(0.8200);">21/10/2020 14:07</div>
<div class="a" style="left:545px;top:235.5px;width:21px;height:12px;overflow:hidden"><div class="t" style="left:0.01px;top:2.15px;font-size:8.7px;color:#6d6d6d;font-weight:normal;transform:scaleX(0.8200);">Dossier de fichiers</div>
</div>
<svg class="a" style="left:295.5px;top:249.10000000000002px;" width="9" height="10" viewBox="0 0 9 10"><rect x="0.3" y="0.6" width="8.4" height="9" fill="#f8d775"/><rect x="0.3" y="0.6" width="3.4" height="1.4" fill="#e4b440"/><rect x="0.3" y="2.2" width="8.4" height="7.4" fill="#fbe08a"/></svg>
<div class="a" style="left:307px;top:248.60000000000002px;width:144px;height:12px;overflow:hidden"><div class="t" style="left:-0.01px;top:2.15px;font-size:8.7px;color:#1a1a1a;font-weight:normal;transform:scaleX(0.8509);">NoteBurner iTunes DRM Audio Converter</div>
</div>
<div class="t" style="left:455.64px;top:251.15px;font-size:8.7px;color:#6d6d6d;font-weight:normal;transform:scaleX(0.8200);">21/10/2020 15:51</div>
<div class="a" style="left:545px;top:248.60000000000002px;width:21px;height:12px;overflow:hidden"><div class="t" style="left:0.01px;top:2.15px;font-size:8.7px;color:#6d6d6d;font-weight:normal;transform:scaleX(0.8200);">Dossier de fichiers</div>
</div>
<svg class="a" style="left:295.5px;top:261.9px;" width="9" height="10" viewBox="0 0 9 10"><rect x="0.3" y="0.6" width="8.4" height="9" fill="#f8d775"/><rect x="0.3" y="0.6" width="3.4" height="1.4" fill="#e4b440"/><rect x="0.3" y="2.2" width="8.4" height="7.4" fill="#fbe08a"/></svg>
<div class="a" style="left:307px;top:261.4px;width:144px;height:12px;overflow:hidden"><div class="t" style="left:-0.01px;top:2.15px;font-size:8.7px;color:#1a1a1a;font-weight:normal;transform:scaleX(0.8509);">NoteBurner Netflix Video Downloader</div>
</div>
<div class="t" style="left:455.73px;top:263.15px;font-size:8.7px;color:#6d6d6d;font-weight:normal;transform:scaleX(0.8200);">05/11/2020 10:39</div>
<div class="a" style="left:545px;top:261.4px;width:21px;height:12px;overflow:hidden"><div class="t" style="left:0.01px;top:2.15px;font-size:8.7px;color:#6d6d6d;font-weight:normal;transform:scaleX(0.8200);">Dossier de fichiers</div>
</div>
<div class="a" style="left:567px;top:202px;width:9px;height:70px;background:#f0f0f0"></div>
<svg class="a" style="left:568px;top:206px;" width="7" height="5" viewBox="0 0 7 5"><path d="M1 3.8 L3.5 1.2 L6 3.8" fill="none" stroke="#555" stroke-width="1.1"/></svg>
<div class="a" style="left:568px;top:214px;width:7px;height:9px;background:#cdcdcd"></div>
<svg class="a" style="left:568px;top:264px;" width="7" height="5" viewBox="0 0 7 5"><path d="M1 1.2 L3.5 3.8 L6 1.2" fill="none" stroke="#555" stroke-width="1.1"/></svg>
<div class="a" style="left:282px;top:272px;width:285px;height:9px;background:#f0f0f0"></div>
<svg class="a" style="left:286px;top:273px;" width="5" height="7" viewBox="0 0 5 7"><path d="M3.8 1 L1.2 3.5 L3.8 6" fill="none" stroke="#555" stroke-width="1.1"/></svg>
<div class="a" style="left:294px;top:273px;width:191px;height:7px;background:#cdcdcd"></div>
<svg class="a" style="left:559px;top:273px;" width="5" height="7" viewBox="0 0 5 7"><path d="M1.2 1 L3.8 3.5 L1.2 6" fill="none" stroke="#555" stroke-width="1.1"/></svg>
<div class="a" style="left:185px;top:281px;width:391px;height:47px;background:#f0f0f0"></div>
<div class="t" style="left:264.97px;top:291.15px;font-size:8.7px;color:#1a1a1a;font-weight:normal;transform:scaleX(0.8818);"><u>N</u>om du fichier :</div>
<div class="a" style="left:321px;top:287px;width:122px;height:15px;background:#fff;border:1px solid #7a7a7a"></div>
<div class="t" style="left:323.39px;top:291.15px;font-size:8.7px;color:#1a1a1a;font-weight:normal;transform:scaleX(0.8914);">spotify music</div>
<svg class="a" style="left:433px;top:292px;" width="7" height="5" viewBox="0 0 7 5"><path d="M0.8 1 L3.5 3.8 L6.2 1" fill="none" stroke="#555" stroke-width="1"/></svg>
<div class="a" style="left:450px;top:287px;width:117px;height:15px;background:#e1e1e1;border:1px solid #adadad"></div>
<div class="t" style="left:451.99px;top:291.15px;font-size:8.7px;color:#1a1a1a;font-weight:normal;transform:scaleX(0.8488);">Musics (*.mp3;*.m4a;*.wma;*.w</div>
<svg class="a" style="left:558px;top:292px;" width="7" height="5" viewBox="0 0 7 5"><path d="M0.8 1 L3.5 3.8 L6.2 1" fill="none" stroke="#555" stroke-width="1"/></svg>
<div class="a" style="left:448px;top:303px;width:58px;height:20px;background:#f23a3a;box-shadow:1px 2px 3px rgba(0,0,0,.35)"></div>
<div class="a" style="left:452px;top:307px;width:51px;height:13px;background:linear-gradient(#c4c4c4,#ededed 40%,#ededed 60%,#c8c8c8);box-shadow:inset 3px 0 3px #b0b0b0,inset -3px 0 3px #b0b0b0"></div>
<div class="t" style="left:467.04px;top:309.15px;font-size:8.7px;color:#1a1a1a;font-weight:normal;transform:scaleX(0.8642);">Ouvrir</div>
<div class="a" style="left:513px;top:306px;width:53px;height:14.5px;background:#e1e1e1;border:1px solid #adadad"></div>
<div class="t" style="left:526.58px;top:309.15px;font-size:8.7px;color:#1a1a1a;font-weight:normal;transform:scaleX(0.8713);">Annuler</div>
<svg class="a" style="left:568px;top:319px;" width="8" height="8" viewBox="0 0 8 8"><path d="M7 2 L2 7 M7 4.5 L4.5 7" stroke="#bbb" stroke-width=".9" stroke-dasharray="1 1"/></svg>
</div></body></html>
